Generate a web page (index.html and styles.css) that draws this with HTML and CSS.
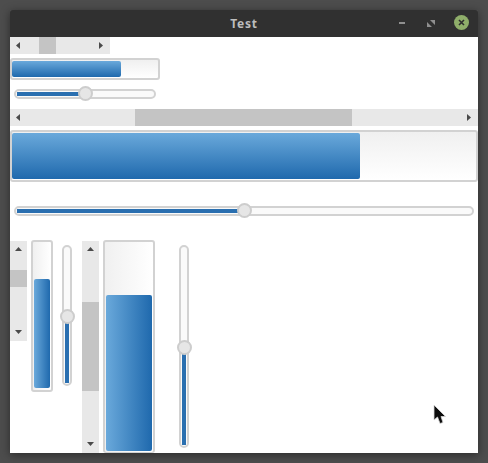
FILE: index.html
```html
<!DOCTYPE html>
<html lang="en">
<head>
    <meta charset="utf-8">
    <title>Test</title>
    <link rel="stylesheet" href="styles.css">
</head>
<body>
    <div class="window">
        <header class="titlebar">
            <span class="title">Test</span>
            <div class="controls">
                <span class="btn-min"></span>
                <svg class="btn-max" width="8" height="8" viewBox="0 0 8 8"><path d="M3 1H8V6Z M0 3L5 8H0Z" fill="#8f8f8f"/></svg>
                <svg class="btn-close" width="15" height="15" viewBox="0 0 15 15"><circle cx="7.5" cy="7.5" r="7.5" fill="#8fae6a"/><path d="M5 5L10 10M10 5L5 10" stroke="#2e2e2e" stroke-width="1.6"/></svg>
            </div>
        </header>
        <main class="content">
            <div class="hscroll small">
                <svg class="arrow" width="17" height="17" viewBox="0 0 17 17"><path d="M6 8.500L10 5V12Z" fill="#4a4a4a"/></svg>
                <div class="track"><div class="thumb" style="margin-left:12px;width:17px"></div></div>
                <svg class="arrow" width="17" height="17" viewBox="0 0 17 17"><path d="M10 8.500L6 5V12Z" fill="#4a4a4a"/></svg>
            </div>
            <div class="progress small"><div class="fill" style="width:109px"></div></div>
            <div class="slider small">
                <div class="groove"><div class="level" style="width:70px"></div></div>
                <span class="knob" style="left:63.500px"></span>
            </div>
            <div class="hscroll wide">
                <svg class="arrow" width="17" height="17" viewBox="0 0 17 17"><path d="M6 8.500L10 5V12Z" fill="#4a4a4a"/></svg>
                <div class="track"><div class="thumb" style="margin-left:108px;width:217px"></div></div>
                <svg class="arrow" width="17" height="17" viewBox="0 0 17 17"><path d="M10 8.500L6 5V12Z" fill="#4a4a4a"/></svg>
            </div>
            <div class="progress wide"><div class="fill" style="width:348px"></div></div>
            <div class="slider wide">
                <div class="groove"><div class="level" style="width:229px"></div></div>
                <span class="knob" style="left:222.500px"></span>
            </div>
            <div class="columns">
                <div class="vscroll short">
                    <svg class="arrow" width="17" height="17" viewBox="0 0 17 17"><path d="M8.500 6L12 10H5Z" fill="#4a4a4a"/></svg>
                    <div class="vtrack"><div class="vthumb" style="margin-top:12px;height:17px"></div></div>
                    <svg class="arrow" width="17" height="17" viewBox="0 0 17 17"><path d="M8.500 10L12 6H5Z" fill="#4a4a4a"/></svg>
                </div>
                <div class="vprogress short"><div class="vfill" style="height:109px"></div></div>
                <div class="vslider short">
                    <div class="vgroove"><div class="vlevel" style="height:70px"></div></div>
                    <span class="vknob" style="top:63.500px"></span>
                </div>
                <div class="vscroll tall">
                    <svg class="arrow" width="17" height="17" viewBox="0 0 17 17"><path d="M8.500 6L12 10H5Z" fill="#4a4a4a"/></svg>
                    <div class="vtrack"><div class="vthumb" style="margin-top:44px;height:89px"></div></div>
                    <svg class="arrow" width="17" height="17" viewBox="0 0 17 17"><path d="M8.500 10L12 6H5Z" fill="#4a4a4a"/></svg>
                </div>
                <div class="vprogress tall"><div class="vfill" style="height:156px"></div></div>
                <div class="vslider tall">
                    <div class="vgroove"><div class="vlevel" style="height:101px"></div></div>
                    <span class="vknob" style="top:94.500px"></span>
                </div>
            </div>
            <svg class="cursor" width="14" height="21" viewBox="0 0 14 21"><path d="M1 1V16L4.500 13L7 19.500L10 18.500L8 12.500H12.500Z" fill="#0c0c0c" stroke="#d8d8d8" stroke-width="0.8"/></svg>
        </main>
    </div>
</body>
</html>
```

FILE: styles.css
```css
* {
    box-sizing: border-box;
}

html, body {
    height: 100%;
}

body {
    margin: 0;
    padding: 10px;
    background-color: #4d4d4d;
    font-family: "Noto Sans", sans-serif;
    overflow: hidden;
}

.window {
    display: flex;
    flex-direction: column;
    width: 468px;
    height: 443px;
    box-shadow: 0 2px 9px rgba(0, 0, 0, 0.45);
}

.titlebar {
    position: relative;
    display: flex;
    flex: 0 0 27px;
    align-items: center;
    justify-content: center;
    background-color: #303030;
    border-radius: 3px 3px 0 0;
}

.title {
    color: #bdbdbd;
    font-size: 12px;
    font-weight: 700;
    letter-spacing: 0.8px;
}

.controls {
    position: absolute;
    top: 5px;
    right: 9px;
    display: flex;
    align-items: center;
}

.btn-min {
    width: 6px;
    height: 2px;
    margin-right: 22px;
    background-color: #8f8f8f;
}

.btn-max {
    margin-right: 19px;
}

.content {
    position: relative;
    flex: 1;
    background-color: #fff;
    overflow: hidden;
}

/* horizontal scrollbars */
.hscroll {
    display: flex;
    height: 17px;
    background-color: #e8e8e8;
}

.hscroll.small {
    width: 100px;
}

.hscroll.wide {
    width: 468px;
    margin-top: 10px;
}

.arrow {
    flex: none;
    display: block;
}

.track {
    flex: 1;
}

.thumb {
    height: 17px;
    background-color: #c4c4c4;
}

/* progress bars */
.progress {
    padding: 1px 0;
    border: 2px solid #d2d2d2;
    border-radius: 3px;
    background: linear-gradient(180deg, #f0f0f0, #fff);
    overflow: hidden;
}

.progress.small {
    width: 150px;
    height: 22px;
    margin-top: 4px;
}

.progress.wide {
    width: 468px;
    height: 52px;
    margin-top: 4px;
}

.fill {
    height: 100%;
    border-radius: 2px;
    background: linear-gradient(180deg, #6aa9db, #1f69ad);
}

/* sliders */
.slider {
    position: relative;
    margin-left: 4px;
    height: 10px;
}

.slider.small {
    width: 142px;
    margin-top: 9px;
}

.slider.wide {
    width: 460px;
    margin-top: 24px;
}

.groove {
    height: 10px;
    padding: 1px;
    border: 2px solid #d2d2d2;
    border-radius: 5px;
    background-color: #fafafa;
}

.level {
    height: 100%;
    background-color: #2a6fb0;
}

.knob {
    position: absolute;
    top: -3px;
    width: 15px;
    height: 15px;
    border: 2px solid #cdcdcd;
    border-radius: 50%;
    background-color: #e6e6e6;
}

/* vertical widgets */
.columns {
    display: flex;
    align-items: flex-start;
    margin-top: 24px;
}

.vscroll {
    display: flex;
    flex-direction: column;
    width: 17px;
    background-color: #e8e8e8;
}

.vscroll.short {
    height: 100px;
    margin-top: 1px;
}

.vscroll.tall {
    height: 212px;
    margin: 1px 0 0 10px;
}

.vtrack {
    flex: 1;
}

.vthumb {
    background-color: #c4c4c4;
}

.vprogress {
    display: flex;
    align-items: flex-end;
    margin-left: 4px;
    padding: 2px 1px;
    border: 2px solid #d2d2d2;
    border-radius: 3px;
    background: linear-gradient(90deg, #f0f0f0, #fff);
}

.vprogress.short {
    width: 22px;
    height: 152px;
}

.vprogress.tall {
    width: 52px;
    height: 213px;
    border-bottom-width: 1px;
    padding-bottom: 1px;
}

.vfill {
    width: 100%;
    border-radius: 2px;
    background: linear-gradient(90deg, #6aa9db, #1f69ad);
}

.vslider {
    position: relative;
    width: 10px;
    margin-top: 5px;
}

.vslider.short {
    height: 141px;
    margin-left: 9px;
}

.vslider.tall {
    height: 203px;
    margin-left: 24px;
}

.vgroove {
    display: flex;
    align-items: flex-end;
    height: 100%;
    padding: 1px;
    border: 2px solid #d2d2d2;
    border-radius: 5px;
    background-color: #fafafa;
}

.vlevel {
    width: 100%;
    background-color: #2a6fb0;
}

.vknob {
    position: absolute;
    left: -2.500px;
    width: 15px;
    height: 15px;
    border: 2px solid #cdcdcd;
    border-radius: 50%;
    background-color: #e6e6e6;
}

.cursor {
    position: absolute;
    left: 423px;
    top: 367px;
}
```
